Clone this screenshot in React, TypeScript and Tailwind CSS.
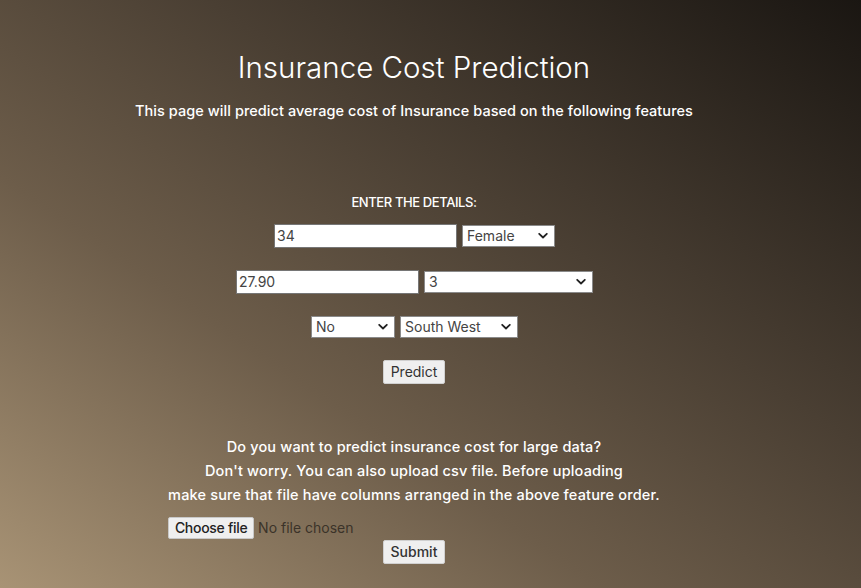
import React from "react";

const Chevron = () => (
  <svg className="pointer-events-none absolute right-[6px] top-1/2 -translate-y-1/2" width="10" height="7" viewBox="0 0 10 7">
    <path d="M1.2 1.3 L5 5 L8.8 1.3" fill="none" stroke="#222" strokeWidth="1.8" strokeLinecap="round" strokeLinejoin="round" />
  </svg>
);

function Sel({ w, value }: { w: string; value: string }) {
  return (
    <div className={`relative h-[22px] bg-white border border-[#8a8a8a] ${w}`}>
      <div className="px-[4px] text-[14px] leading-[20px] text-[#444] text-left">{value}</div>
      <Chevron />
    </div>
  );
}

function Inp({ value }: { value: string }) {
  return (
    <div className="h-[24px] w-[183px] bg-white border border-[#767676] px-[2px] text-left text-[14px] leading-[22px] text-[#444]">
      {value}
    </div>
  );
}

function Btn({ label }: { label: string }) {
  return (
    <div className="h-[24px] px-[7px] bg-[#efefef] border border-[#d0d0d0] rounded-[2px] text-[14px] leading-[22px] text-[#333]">
      {label}
    </div>
  );
}

export default function App() {
  return (
    <div
      className="w-[861px] h-[588px] overflow-hidden bg-[linear-gradient(to_top_right,#a89375_0%,#6d5d4a_35%,#4a3f33_62%,#1a1612_100%)]"
      style={{ fontFamily: "Inter, 'Noto Sans', sans-serif" }}
    >
      <div className="w-[828px] flex flex-col items-center text-white">
        <h1 className="mt-[47px] text-[29.5px] leading-[40px] font-light tracking-[0px]">Insurance Cost Prediction</h1>
        <p className="mt-[14px] text-[14.5px] leading-[20px] font-medium tracking-[0.05px]">
          This page will predict average cost of Insurance based on the following features
        </p>
        <div className="mt-[72px] text-[13px] leading-[18px] font-medium tracking-[-0.4px]">ENTER THE DETAILS:</div>
        <div className="mt-[13px] flex items-center gap-[5px] ml-[1px]">
          <Inp value="34" />
          <Sel w="w-[93px]" value="Female" />
        </div>
        <div className="mt-[22px] flex items-center gap-[5px] ml-[1px]">
          <Inp value="27.90" />
          <Sel w="w-[169px]" value="3" />
        </div>
        <div className="mt-[22px] flex items-center gap-[5px] ml-[1px]">
          <Sel w="w-[84px]" value="No" />
          <Sel w="w-[118px]" value="South West" />
        </div>
        <div className="mt-[22px]">
          <Btn label="Predict" />
        </div>
        <div className="mt-[51px] text-center text-[14.5px] leading-[24px] font-medium tracking-[0.16px]">
          <div>Do you want to predict insurance cost for large data?</div>
          <div>Don't worry. You can also upload csv file. Before uploading</div>
          <div>make sure that file have columns arranged in the above feature order.</div>
          <div className="mt-[9px] flex items-center gap-[4px] text-left tracking-normal">
            <div className="h-[22px] w-[86px] text-center bg-[#efefef] border border-[#c8c8c8] rounded-[2px] text-[14px] leading-[20px] tracking-[-0.3px] text-[#222]">
              Choose file
            </div>
            <span className="text-[14px] font-normal text-[#3b3329]">No file chosen</span>
          </div>
          <div className="flex justify-center mt-[0px] tracking-normal">
            <Btn label="Submit" />
          </div>
        </div>
      </div>
    </div>
  );
}
